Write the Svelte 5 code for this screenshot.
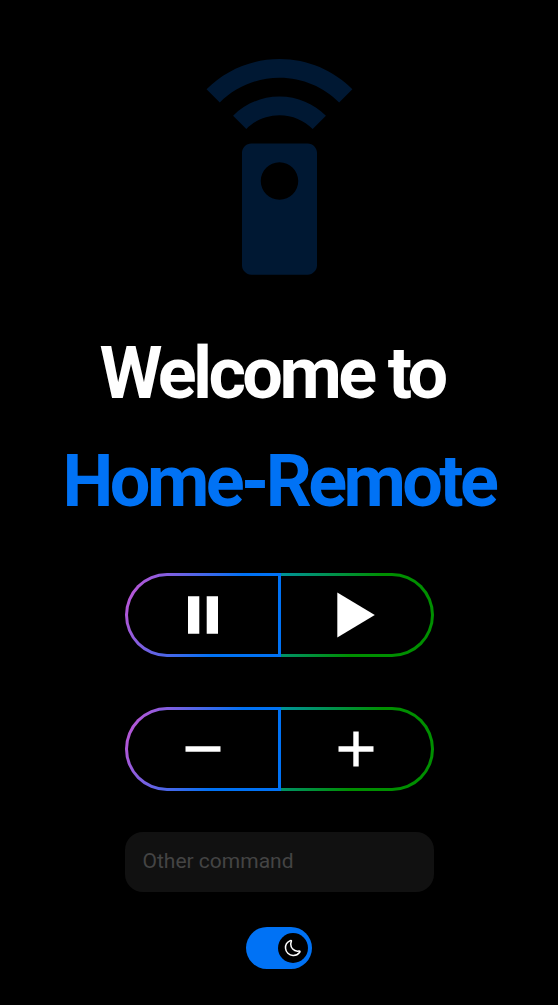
<script>
  let command = $state('');
  let dark = $state(true);
</script>

<main>
  <svg class="logo" viewBox="0 0 24 24" aria-hidden="true">
    <path d="M15 9H9c-.55 0-1 .45-1 1v12c0 .55.45 1 1 1h6c.55 0 1-.45 1-1V10c0-.55-.45-1-1-1zm-3 6c-1.1 0-2-.9-2-2s.9-2 2-2 2 .9 2 2-.9 2-2 2zM7.05 6.05l1.41 1.41C9.37 6.56 10.62 6 12 6s2.63.56 3.54 1.46l1.41-1.41C15.68 4.78 13.93 4 12 4s-3.68.78-4.95 2.05zM12 0C8.96 0 6.21 1.23 4.22 3.22l1.41 1.41C7.26 3.01 9.51 2 12 2s4.74 1.01 6.36 2.64l1.41-1.41C17.79 1.23 15.04 0 12 0z" />
  </svg>

  <h1 class="welcome">Welcome to</h1>
  <h1 class="name">Home-Remote</h1>

  <div class="group">
    <button class="left" aria-label="Pause">
      <svg viewBox="0 0 48 48"><path d="M9 5.3h11.3v37.4H9zM27.7 5.3H39v37.4H27.7z" /></svg>
    </button>
    <button class="right" aria-label="Play">
      <svg viewBox="0 0 48 48"><path d="M3.3 1.5 40.8 24 3.3 46.5z" /></svg>
    </button>
  </div>

  <div class="group">
    <button class="left" aria-label="Volume down">
      <svg viewBox="0 0 48 48"><path d="M6.5 21.3h35v5.4h-35z" /></svg>
    </button>
    <button class="right" aria-label="Volume up">
      <svg viewBox="0 0 48 48"><path d="M4.5 21.3h14.8V6.5h5.4v14.8h14.8v5.4H24.7v14.8h-5.4V26.7H4.5z" /></svg>
    </button>
  </div>

  <input bind:value={command} placeholder="Other command" />

  <button class="switch" class:on={dark} aria-label="Dark mode" onclick={() => (dark = !dark)}>
    <span class="thumb">
      <svg viewBox="0 0 24 24">
        <path d="M2.03 12.42c.36 5.15 4.73 9.34 9.96 9.57 3.69.16 6.99-1.56 8.97-4.27.82-1.11.38-1.85-.99-1.6-.67.12-1.36.17-2.08.14C13 16.06 9 11.97 8.98 7.14c-.01-1.3.26-2.53.75-3.65.54-1.24-.11-1.83-1.36-1.3C4.41 3.86 1.7 7.85 2.03 12.42z" />
      </svg>
    </span>
  </button>
</main>

<style>
  :global(body) {
    margin: 0;
    background: #000;
  }
  main {
    box-sizing: border-box;
    height: 1005px;
    padding-top: 59px;
    display: flex;
    flex-direction: column;
    align-items: center;
    background: #000;
    font-family: Roboto, sans-serif;
    overflow: hidden;
  }
  .logo {
    width: 225px;
    height: 225px;
    margin: 0 0 36px 1px;
    fill: #001833;
    flex: none;
  }
  h1 {
    margin: 0;
    font-size: 72px;
    line-height: 108px;
    font-weight: 700;
    letter-spacing: -3.6px;
    white-space: pre;
  }
  .welcome {
    color: #fff;
    margin-right: 14px;
  }
  .name {
    color: #0072f5;
    margin-bottom: 37px;
  }
  .group {
    display: flex;
    width: 309px;
    height: 84px;
    margin: 0 0 50px 1px;
    flex: none;
  }
  button {
    padding: 0;
    border: 0;
    cursor: pointer;
  }
  .group button {
    box-sizing: border-box;
    display: flex;
    align-items: center;
    justify-content: center;
    border: 3px solid transparent;
  }
  .left {
    width: 156px;
    border-radius: 42px 0 0 42px;
    background:
      linear-gradient(#000, #000) padding-box,
      linear-gradient(112deg, #bc56d6 5%, #0072f5 63%) border-box;
  }
  .group .left {
    border-right-width: 0;
    padding-right: 3px;
    box-shadow: inset -3px 0 #0072f5;
  }
  .right {
    width: 153px;
    border-radius: 0 42px 42px 0;
    background:
      linear-gradient(#000, #000) padding-box,
      linear-gradient(112deg, #0095a8 -5%, #008f00 55%) border-box;
  }
  .group .right {
    border-left-width: 0;
    padding-left: 3px;
  }
  .group svg {
    width: 48px;
    height: 48px;
    fill: #fff;
  }
  input {
    box-sizing: border-box;
    width: 309px;
    height: 60px;
    margin: -9px 0 35px 1px;
    padding: 0 17.5px 2px;
    border: 0;
    border-radius: 18px;
    outline: 0;
    background: #111;
    color: #fff;
    font: 400 21px Roboto, sans-serif;
    flex: none;
  }
  input::placeholder {
    color: #444;
    opacity: 1;
  }
  .switch {
    display: flex;
    align-items: center;
    box-sizing: border-box;
    width: 66px;
    height: 42px;
    padding: 0 4.5px;
    border-radius: 21px;
    background: #333;
    flex: none;
  }
  .switch.on {
    justify-content: flex-end;
    background: #0072f5;
  }
  .thumb {
    display: flex;
    align-items: center;
    justify-content: center;
    width: 30px;
    height: 30px;
    border-radius: 50%;
    background: #000;
  }
  .thumb svg {
    width: 18px;
    height: 18px;
    margin-bottom: 1px;
    fill: none;
    stroke: #fff;
    stroke-width: 2;
    stroke-linejoin: round;
  }
</style>
